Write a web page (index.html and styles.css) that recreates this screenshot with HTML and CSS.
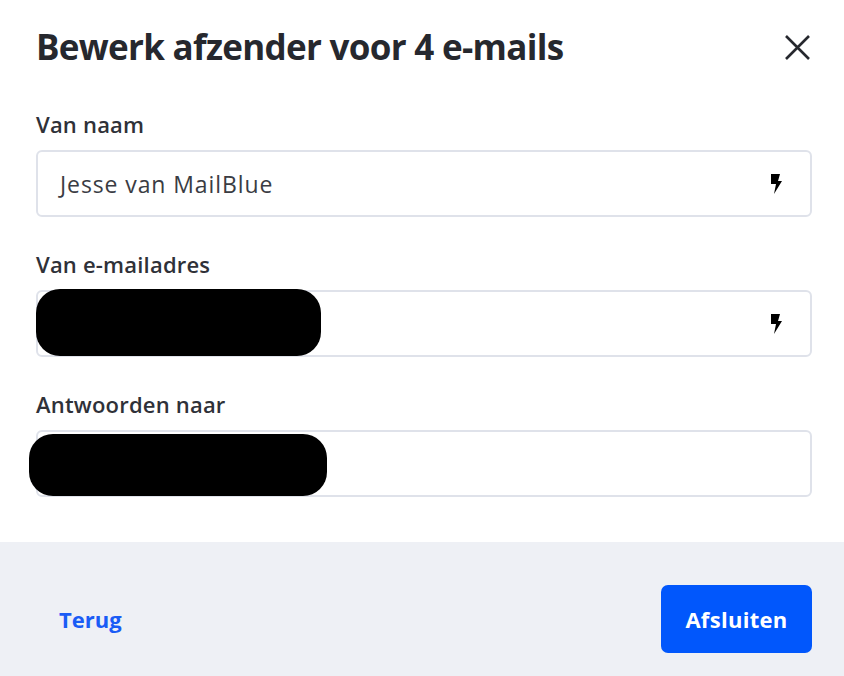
FILE: index.html
```html
<!DOCTYPE html>
<html lang="nl">
<head>
<meta charset="utf-8">
<link rel="stylesheet" href="styles.css">
</head>
<body>
<div class="modal">
  <div class="body">
    <div class="header">
      <h1 class="title">Bewerk afzender voor 4 e-mails</h1>
      <button class="close" aria-label="Sluiten">
        <svg width="27" height="27" viewBox="0 0 27 27"><path d="M2 2 L25 25 M25 2 L2 25" stroke="#26282e" stroke-width="2.6" fill="none"/></svg>
      </button>
    </div>
    <div class="field">
      <label class="label">Van naam</label>
      <div class="input">
        <span class="value">Jesse van MailBlue</span>
        <svg class="bolt" width="12" height="20" viewBox="0 0 12 20"><path d="M1 0 H10 L8 7 H12 L4 20 L6 10 H1 Z" fill="#000"/></svg>
      </div>
    </div>
    <div class="field">
      <label class="label">Van e-mailadres</label>
      <div class="input">
        <span class="value"></span>
        <svg class="bolt" width="12" height="20" viewBox="0 0 12 20"><path d="M1 0 H10 L8 7 H12 L4 20 L6 10 H1 Z" fill="#000"/></svg>
        <div class="redact redact-a"></div>
      </div>
    </div>
    <div class="field">
      <label class="label">Antwoorden naar</label>
      <div class="input">
        <span class="value"></span>
        <div class="redact redact-b"></div>
      </div>
    </div>
  </div>
  <div class="footer">
    <a class="back" href="#">Terug</a>
    <button class="primary">Afsluiten</button>
  </div>
</div>
</body>
</html>
```
FILE: styles.css
```css
* { box-sizing: border-box; }
html, body { margin: 0; padding: 0; background: #fff; }
body { font-family: "Open Sans", "Liberation Sans", sans-serif; color: #26282e; width: 844px; height: 676px; overflow: hidden; }
.modal { display: flex; flex-direction: column; height: 676px; }
.body { padding: 0 32px 0 36px; flex: 0 0 542px; }
.header { display: flex; justify-content: space-between; align-items: center; height: 95px; padding-bottom: 3px; }
.title { margin: 0; font-size: 35px; font-weight: 700; letter-spacing: -0.7px; color: #26282e; }
.close { background: none; border: 0; padding: 0; margin-right: 1px; margin-top: 2px; width: 27px; height: 27px; display: flex; }
.field { display: flex; flex-direction: column; margin-top: 15px; }
.field + .field { margin-top: 33px; }
.label { font-size: 22px; font-weight: 600; color: #2f3138; height: 40px; line-height: 28px; letter-spacing: 0.2px; }
.input { position: relative; height: 67px; border: 2px solid #dfe2ea; border-radius: 6px; display: flex; align-items: center; justify-content: space-between; padding: 0 28px 0 22px; background: #fff; }
.value { font-size: 23px; color: #3a3c43; letter-spacing: 0.9px; }
.bolt { display: block; }
.redact { position: absolute; background: #000; border-radius: 24px; }
.redact-a { left: -2px; top: -3px; width: 285px; height: 67px; }
.redact-b { left: -9px; top: 2px; width: 298px; height: 62px; }
.footer { flex: 1; background: #eef0f5; display: flex; align-items: center; justify-content: space-between; padding: 19px 32px 0 59px; }
.back { color: #1a5cf5; font-weight: 700; font-size: 22px; text-decoration: none; }
.primary { background: #0157fc; color: #fff; border: 0; border-radius: 7px; width: 151px; height: 68px; font-family: inherit; font-size: 22px; font-weight: 700; letter-spacing: 0.3px; }
```
